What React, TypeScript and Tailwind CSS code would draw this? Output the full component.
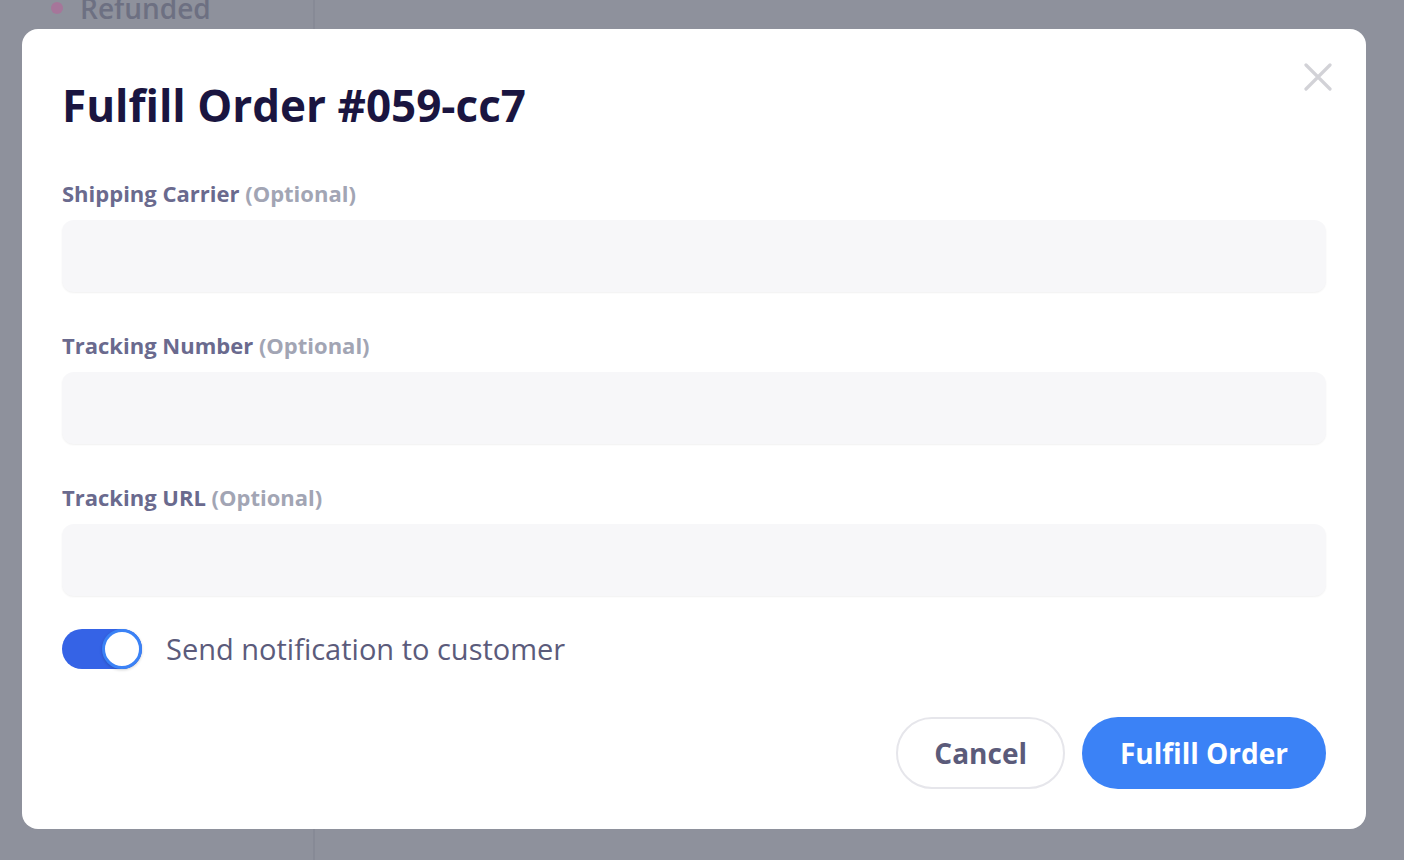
const fields = ["Shipping Carrier", "Tracking Number", "Tracking URL"];

function Field({ label }: { label: string }) {
  return (
    <div className="flex flex-col gap-[12px]">
      <label className="text-[22px] leading-[30px] font-bold text-[#6a6a8e]">
        {label} <span className="text-[#a2a5b4]">(Optional)</span>
      </label>
      <input className="h-[72px] w-full rounded-[12px] bg-[#f7f7f9] shadow-[0_1px_2px_rgba(0,0,0,0.06)] outline-none px-5 text-[24px]" />
    </div>
  );
}

export default function App() {
  return (
    <div
      className="relative h-[860px] w-full overflow-hidden bg-[#8e919c]"
      style={{ fontFamily: '"Open Sans", "Noto Sans", sans-serif' }}
    >
      {/* page behind the overlay */}
      <div className="absolute left-[313px] top-0 h-full w-[2px] bg-[#878a96]" />
      <div className="flex items-center gap-[17px] pl-[51px] -mt-[12px]">
        <span className="h-[12px] w-[12px] rounded-full bg-[#a6769a]" />
        <span className="text-[28px] font-semibold leading-[40px] text-[#6d7082]">Refunded</span>
      </div>

      {/* modal */}
      <div className="absolute left-[22px] top-[29px] w-[1344px] h-[800px] rounded-[16px] bg-white px-[40px] pt-[46px]">
        <button className="absolute right-[34px] top-[34px]">
          <svg width="28" height="28" viewBox="0 0 28 28" fill="none" stroke="#d2d2d7" strokeWidth="3.2" strokeLinecap="round">
            <path d="M2 2L26 26M26 2L2 26" />
          </svg>
        </button>
        <h1 className="text-[44px] leading-[60px] font-bold text-[#1a1540]">Fulfill Order #059-cc7</h1>

        <div className="mt-[43px] flex flex-col gap-[38px]">
          {fields.map((f) => (
            <Field key={f} label={f} />
          ))}
        </div>

        <div className="mt-[33px] flex items-center gap-[24px]">
          <div className="relative h-[40px] w-[80px] rounded-full bg-[#3563e6]">
            <span className="absolute right-0 top-0 h-[40px] w-[40px] rounded-full border-[3px] border-[#3b82f6] bg-white shadow-[0_1px_3px_rgba(0,0,0,0.2)]" />
          </div>
          <span className="text-[29px] leading-[40px] text-[#5b5b7b]">Send notification to customer</span>
        </div>

        <div className="mt-[48px] flex justify-end gap-[17px]">
          <button className="h-[72px] rounded-full border-2 border-[#e6e6eb] px-[36px] text-[28px] font-bold text-[#5b5b7a]">
            Cancel
          </button>
          <button className="h-[72px] rounded-full bg-[#3b82f6] px-[38px] text-[28px] font-bold text-white">
            Fulfill Order
          </button>
        </div>
      </div>
    </div>
  );
}
